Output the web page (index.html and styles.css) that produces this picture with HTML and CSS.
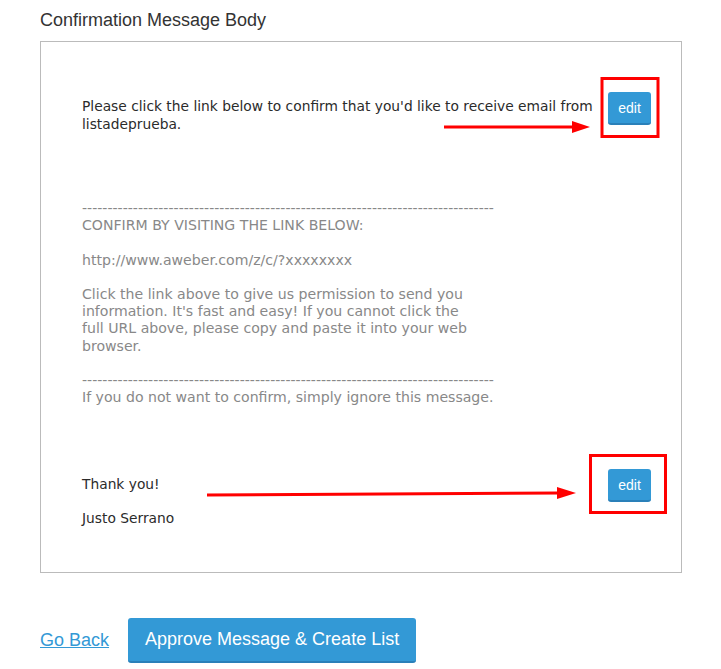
FILE: index.html
```html
<!DOCTYPE html>
<html lang="en">
<head>
    <meta charset="UTF-8">
    <title>Confirmation Message</title>
    <link rel="stylesheet" href="styles.css">
</head>
<body>
<div class="page">
    <h3 class="label">Confirmation Message Body</h3>

    <div class="message-box">
        <div class="msg-row first">
            <p class="msg-text">Please click the link below to confirm that you'd like to receive email from listadeprueba.</p>
            <button class="edit-btn">edit</button>
        </div>

        <div class="msg-plain">---------------------------------------------------------------------------------
CONFIRM BY VISITING THE LINK BELOW:

http://www.aweber.com/z/c/?xxxxxxxx

Click the link above to give us permission to send you
information. It's fast and easy! If you cannot click the
full URL above, please copy and paste it into your web
browser.

---------------------------------------------------------------------------------
If you do not want to confirm, simply ignore this message.</div>

        <div class="msg-row last">
            <div class="msg-text">
                <p>Thank you!</p>
                <p>Justo Serrano</p>
            </div>
            <button class="edit-btn">edit</button>
        </div>
    </div>

    <div class="actions">
        <a href="#" class="back-link">Go Back</a>
        <button class="primary-btn">Approve Message &amp; Create List</button>
    </div>

    <!-- red annotations drawn over the screenshot -->
    <svg class="marks" width="721" height="669" viewBox="0 0 721 669">
        <rect x="602" y="78.5" width="56" height="58" fill="none" stroke="#ff0000" stroke-width="3"/>
        <line x1="444" y1="127" x2="574" y2="127" stroke="#ff0000" stroke-width="3"/>
        <polygon points="572,121 590,127 572,133" fill="#ff0000"/>
        <rect x="590.5" y="455.5" width="75" height="57" fill="none" stroke="#ff0000" stroke-width="3"/>
        <line x1="207" y1="495" x2="560" y2="493" stroke="#ff0000" stroke-width="3"/>
        <polygon points="557,487 576,493 557,499" fill="#ff0000"/>
    </svg>
</div>
</body>
</html>
```

FILE: styles.css
```css
body {
    margin: 0;
    font-family: "Liberation Sans", Arial, sans-serif;
    color: #333;
    background-color: #fff;
}

.page {
    position: relative;
    padding: 10px 39px 0 40px;
}

.label {
    margin: 0 0 11px;
    font-size: 18px;
    font-weight: normal;
    line-height: 20px;
    color: #333;
}

/* Message preview */
.message-box {
    border: 1px solid #bbb;
    height: 530px;
    padding: 0 30px 0 41px;
    font-family: "DejaVu Sans", Verdana, sans-serif;
    font-size: 13.8px;
}

.msg-row {
    display: flex;
    justify-content: space-between;
    align-items: flex-start;
}

.msg-row.first {
    margin-top: 50px;
}

.msg-row.last {
    margin-top: 63px;
}

.msg-text {
    margin: 0;
    width: 522px;
    line-height: 18px;
    color: #2b2b2b;
}

.msg-row.first .msg-text {
    padding-top: 5px;
}

.msg-row.last .msg-text {
    padding-top: 6px;
}

.msg-text p {
    margin: 0 0 16px;
}

.msg-plain {
    margin-top: 67px;
    white-space: pre-wrap;
    font-size: 14.1px;
    line-height: 17.2px;
    color: #888;
}

.edit-btn {
    width: 43px;
    height: 33px;
    padding: 0;
    border: none;
    border-bottom: 2px solid #2a80b9;
    border-radius: 3px;
    background-color: #3399d6;
    color: #fff;
    font-family: "Liberation Sans", Arial, sans-serif;
    font-size: 14px;
}

/* Bottom actions */
.actions {
    display: flex;
    align-items: center;
    gap: 19px;
    margin-top: 45px;
}

.back-link {
    color: #3399d6;
    font-size: 18px;
}

.primary-btn {
    height: 45px;
    padding: 0 17px;
    border: none;
    border-bottom: 2px solid #2a80b9;
    border-radius: 3px;
    background-color: #3399d6;
    color: #fff;
    font-family: "Liberation Sans", Arial, sans-serif;
    font-size: 18px;
}

.marks {
    position: absolute;
    top: 0;
    left: 0;
    pointer-events: none;
}
```
